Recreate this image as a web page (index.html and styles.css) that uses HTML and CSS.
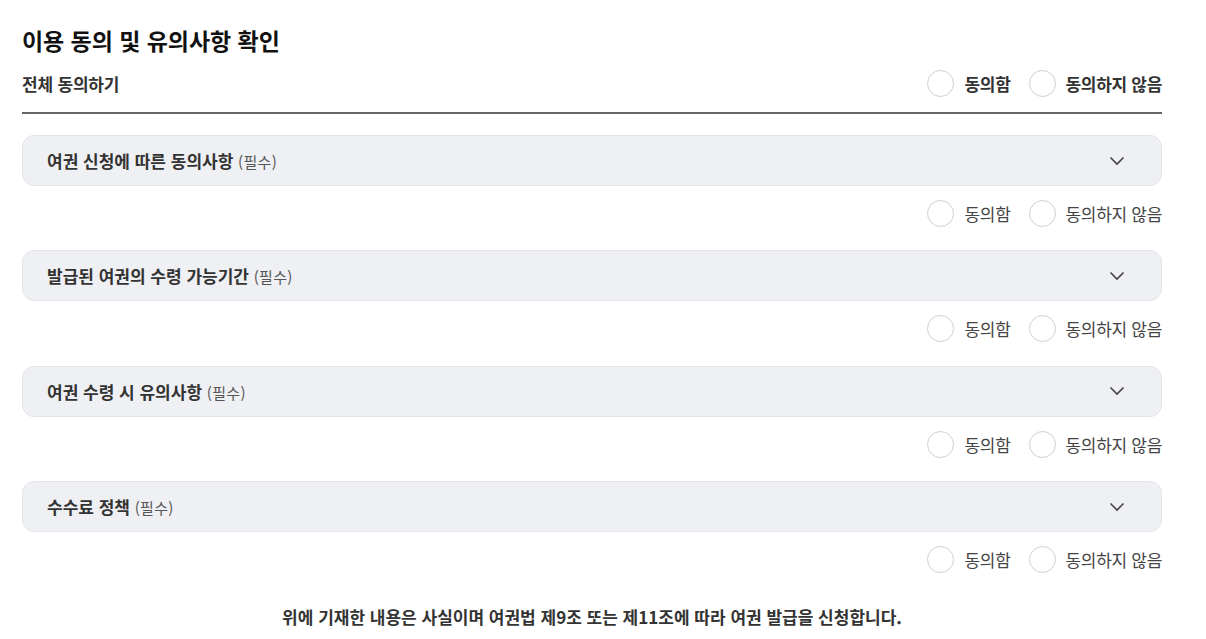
FILE: index.html
```html
<!DOCTYPE html>
<html lang="ko">
<head>
<meta charset="utf-8">
<link rel="stylesheet" href="styles.css">
</head>
<body>
<div class="page">
  <h2 class="title">이용 동의 및 유의사항 확인</h2>
  <div class="all-row">
    <span class="all-label">전체 동의하기</span>
    <div class="radios bold">
      <label class="radio"><span class="circle"></span><span>동의함</span></label>
      <label class="radio"><span class="circle"></span><span>동의하지 않음</span></label>
    </div>
  </div>

  <div class="item">
    <div class="acc"><span class="acc-title">여권 신청에 따른 동의사항 <em>(필수)</em></span><svg class="chev" width="16" height="10" viewBox="0 0 16 10"><path d="M1.5 1.5 L8 8 L14.5 1.5" fill="none" stroke="#444" stroke-width="1.6"/></svg></div>
    <div class="radios">
      <label class="radio"><span class="circle"></span><span>동의함</span></label>
      <label class="radio"><span class="circle"></span><span>동의하지 않음</span></label>
    </div>
  </div>

  <div class="item">
    <div class="acc"><span class="acc-title">발급된 여권의 수령 가능기간 <em>(필수)</em></span><svg class="chev" width="16" height="10" viewBox="0 0 16 10"><path d="M1.5 1.5 L8 8 L14.5 1.5" fill="none" stroke="#444" stroke-width="1.6"/></svg></div>
    <div class="radios">
      <label class="radio"><span class="circle"></span><span>동의함</span></label>
      <label class="radio"><span class="circle"></span><span>동의하지 않음</span></label>
    </div>
  </div>

  <div class="item">
    <div class="acc"><span class="acc-title">여권 수령 시 유의사항 <em>(필수)</em></span><svg class="chev" width="16" height="10" viewBox="0 0 16 10"><path d="M1.5 1.5 L8 8 L14.5 1.5" fill="none" stroke="#444" stroke-width="1.6"/></svg></div>
    <div class="radios">
      <label class="radio"><span class="circle"></span><span>동의함</span></label>
      <label class="radio"><span class="circle"></span><span>동의하지 않음</span></label>
    </div>
  </div>

  <div class="item">
    <div class="acc"><span class="acc-title">수수료 정책 <em>(필수)</em></span><svg class="chev" width="16" height="10" viewBox="0 0 16 10"><path d="M1.5 1.5 L8 8 L14.5 1.5" fill="none" stroke="#444" stroke-width="1.6"/></svg></div>
    <div class="radios">
      <label class="radio"><span class="circle"></span><span>동의함</span></label>
      <label class="radio"><span class="circle"></span><span>동의하지 않음</span></label>
    </div>
  </div>

  <p class="footer">위에 기재한 내용은 사실이며 여권법 제9조 또는 제11조에 따라 여권 발급을 신청합니다.</p>
</div>
</body>
</html>
```

FILE: styles.css
```css
* { box-sizing: border-box; }
html, body { margin: 0; padding: 0; background: #fff; }
body {
  font-family: "Noto Sans CJK KR", "Noto Sans", sans-serif;
  color: #333;
}
.page {
  width: 1140px;
  margin-left: 22px;
  padding-top: 23px;
}
.title {
  margin: 0;
  font-size: 23px;
  line-height: 34px;
  font-weight: 700;
  color: #111;
  letter-spacing: -0.05px;
}
.all-row {
  display: flex;
  align-items: center;
  justify-content: space-between;
  height: 40px;
  margin-top: 6px;
  border-bottom: 2px solid #666;
  padding-bottom: 9px;
  box-sizing: content-box;
}
.all-label {
  font-size: 17px;
  font-weight: 700;
  letter-spacing: -0.2px;
  color: #333;
}
.radios {
  display: flex;
  justify-content: flex-end;
  align-items: center;
  gap: 18px;
}
.radio {
  display: flex;
  align-items: center;
  gap: 10px;
  font-size: 17px;
  letter-spacing: -0.3px;
  color: #444;
}
.radios.bold .radio { font-weight: 700; color: #333; }
.circle {
  width: 27px;
  height: 27px;
  border: 1px solid #cfcfd2;
  border-radius: 50%;
  background: #fff;
}
.item { margin-top: 21px; }
.item + .item { margin-top: 23.4px; }
.item .radios { margin-top: 14px; height: 27px; }
.acc {
  display: flex;
  align-items: center;
  justify-content: space-between;
  height: 51px;
  padding: 0 36px 0 24px;
  background: #eff0f3;
  border: 1px solid #e4e5e9;
  border-radius: 12px;
}
.acc-title {
  font-size: 17px;
  font-weight: 700;
  letter-spacing: 0;
  color: #333;
}
.acc-title em {
  font-style: normal;
  font-weight: 400;
  font-size: 15px;
  color: #555;
  letter-spacing: 0.3px;
}
.footer {
  margin: 31px 0 0;
  text-align: center;
  font-size: 17px;
  line-height: 26px;
  font-weight: 700;
  letter-spacing: 0;
  color: #333;
}
```
